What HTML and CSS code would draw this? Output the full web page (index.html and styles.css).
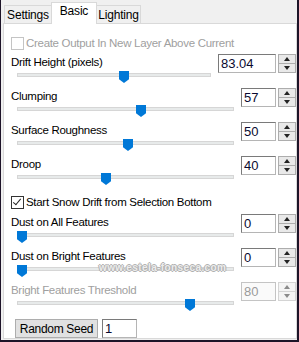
FILE: index.html
```html
<!DOCTYPE html>
<html lang="en">
<head>
    <meta charset="UTF-8">
    <title>Snow Drift - Basic</title>
    <link rel="stylesheet" href="styles.css">
</head>
<body>
    <div class="screen">
        <div class="dialog">
            <div class="tabs">
                <div class="tab settings">Settings</div>
                <div class="tab active">Basic</div>
                <div class="tab lighting">Lighting</div>
            </div>
            <div class="panel">
                <label class="check disabled">
                    <span class="box"></span>
                    Create Output In New Layer Above Current
                </label>

                <div class="param">
                    <div class="label">Drift Height (pixels)</div>
                    <div class="slider"><div class="track"></div><div class="thumb" style="left: 102px"></div></div>
                    <div class="spin wide">
                        <div class="field">83.04</div>
                        <div class="arrows"><span class="up"></span><span class="down"></span></div>
                    </div>
                </div>

                <div class="param">
                    <div class="label">Clumping</div>
                    <div class="slider"><div class="track"></div><div class="thumb" style="left: 119px"></div></div>
                    <div class="spin">
                        <div class="field">57</div>
                        <div class="arrows"><span class="up"></span><span class="down"></span></div>
                    </div>
                </div>

                <div class="param">
                    <div class="label">Surface Roughness</div>
                    <div class="slider"><div class="track"></div><div class="thumb" style="left: 106px"></div></div>
                    <div class="spin">
                        <div class="field">50</div>
                        <div class="arrows"><span class="up"></span><span class="down"></span></div>
                    </div>
                </div>

                <div class="param">
                    <div class="label">Droop</div>
                    <div class="slider"><div class="track"></div><div class="thumb" style="left: 84px"></div></div>
                    <div class="spin">
                        <div class="field">40</div>
                        <div class="arrows"><span class="up"></span><span class="down"></span></div>
                    </div>
                </div>

                <label class="check checked-row">
                    <span class="box checked"></span>
                    Start Snow Drift from Selection Bottom
                </label>

                <div class="param">
                    <div class="label">Dust on All Features</div>
                    <div class="slider"><div class="track"></div><div class="thumb" style="left: 0px"></div></div>
                    <div class="spin">
                        <div class="field">0</div>
                        <div class="arrows"><span class="up"></span><span class="down"></span></div>
                    </div>
                </div>

                <div class="param">
                    <div class="label">Dust on Bright Features</div>
                    <div class="slider"><div class="track"></div><div class="thumb" style="left: 0px"></div></div>
                    <div class="spin">
                        <div class="field">0</div>
                        <div class="arrows"><span class="up"></span><span class="down"></span></div>
                    </div>
                </div>

                <div class="param disabled">
                    <div class="label">Bright Features Threshold</div>
                    <div class="slider"><div class="track"></div><div class="thumb" style="left: 168px"></div></div>
                    <div class="spin">
                        <div class="field">80</div>
                        <div class="arrows"><span class="up"></span><span class="down"></span></div>
                    </div>
                </div>

                <div class="seed-row">
                    <button class="btn">Random Seed</button>
                    <div class="field seed">1</div>
                </div>

                <div class="watermark">www.estela-fonseca.com</div>
            </div>
        </div>
    </div>
</body>
</html>
```

FILE: styles.css
```css
body {
    margin: 0;
    font-family: "Liberation Sans", Arial, sans-serif;
    font-size: 11.5px;
    letter-spacing: -0.3px;
    color: #000;
}

.screen {
    width: 299px;
    height: 342px;
    box-sizing: border-box;
    padding: 0 2px 2px 1px;
    background-color: #1d1428;
}

.dialog {
    height: 100%;
    box-sizing: border-box;
    padding: 0 0 1px 2px;
    background-color: #f0f0f0;
    display: flex;
    flex-direction: column;
}

/* tab strip */
.tabs {
    display: flex;
    align-items: flex-end;
    height: 24px;
    padding-left: 1px;
}

.tab {
    height: 18px;
    line-height: 19px;
    text-align: center;
    border: 1px solid #d9d9d9;
    border-bottom: none;
    border-right: none;
    background-color: #f0f0f0;
    font-size: 12px;
    letter-spacing: -0.2px;
}

.tab.settings {
    width: 46px;
}

.tab.lighting {
    width: 43px;
    border-right: 1px solid #d9d9d9;
}

.tab.active {
    position: relative;
    z-index: 1;
    width: 44px;
    height: 21px;
    line-height: 17px;
    background-color: #fff;
    border-right: 1px solid #d9d9d9;
}

.tab.active + .tab {
    border-left: none;
}

/* panel */
.panel {
    position: relative;
    flex: 1;
    margin-top: -1px;
    padding: 9px 0 0 7px;
    border: 1px solid #d9d9d9;
    background-color: #fff;
}

.check {
    display: flex;
    align-items: center;
    gap: 2px;
    height: 20px;
    margin-bottom: 0;
}

.check.disabled {
    color: #a0a0a0;
}

.checked-row {
    margin: 3px 0 1px;
}

.box {
    width: 11px;
    height: 11px;
    border: 1px solid #333;
    background-color: #fff;
    position: relative;
}

.check.disabled .box {
    border-color: #c4c4c4;
}

.box.checked::after {
    content: "";
    position: absolute;
    left: 3px;
    top: 0;
    width: 3px;
    height: 7px;
    border: solid #222;
    border-width: 0 1.5px 1.5px 0;
    transform: rotate(40deg);
}

/* slider + spin rows */
.param {
    display: grid;
    grid-template-columns: 1fr auto;
    grid-template-rows: 16px 18px;
}

.param .label {
    grid-column: 1;
    grid-row: 1;
    line-height: 18px;
    white-space: nowrap;
}

.param.disabled .label {
    color: #a0a0a0;
}

.slider {
    grid-column: 1;
    grid-row: 2;
    position: relative;
    margin: 0 7px 0 6px;
}

.track {
    margin-top: 4px;
    height: 2px;
    border: 1px solid #d6d6d6;
    background-color: #e7eaea;
}

.thumb {
    position: absolute;
    top: 2px;
    width: 10px;
    height: 12px;
    background-color: #0078d7;
    clip-path: polygon(0 0, 100% 0, 100% 68%, 50% 100%, 0 68%);
}

.spin {
    grid-column: 2;
    grid-row: 1 / span 2;
    align-self: start;
    margin-top: 1px;
    display: flex;
    gap: 2px;
}

.field {
    width: 31px;
    height: 17px;
    line-height: 17px;
    padding-left: 2px;
    border: 1px solid #7a7a7a;
    border-right-color: #b5b5b5;
    border-bottom-color: #b5b5b5;
    background-color: #fff;
    color: #0a0a30;
    font-size: 13px;
    letter-spacing: 0;
}

.spin.wide .field {
    width: 54px;
}

.arrows {
    width: 18px;
    display: flex;
    flex-direction: column;
}

.arrows span {
    flex: 1;
    position: relative;
    border: 1px solid #adadad;
    background-color: #e9e9e9;
}

.arrows .down {
    border-top: none;
}

.arrows span::after {
    content: "";
    position: absolute;
    left: 5px;
    top: 2px;
    border-left: 3px solid transparent;
    border-right: 3px solid transparent;
}

.arrows .up::after {
    border-bottom: 4px solid #222;
}

.arrows .down::after {
    top: 2px;
    border-top: 4px solid #222;
}

.param.disabled .field {
    border-color: #c4c4c4;
    background-color: #fafafa;
    color: #9a9a9a;
}

.param.disabled .arrows span {
    border-color: #d4d4d4;
    background-color: #f4f4f4;
}

.param.disabled .arrows .up::after {
    border-bottom-color: #8a8a8a;
}

.param.disabled .arrows .down::after {
    border-top-color: #8a8a8a;
}

/* bottom row */
.seed-row {
    display: flex;
    gap: 4px;
    margin: 4px 0 0 4px;
}

.btn {
    width: 83px;
    height: 19px;
    padding: 0;
    border: 1px solid #adadad;
    background-color: #e1e1e1;
    font-family: inherit;
    font-size: 12px;
    letter-spacing: -0.3px;
    color: #000;
}

.field.seed {
    width: 31px;
    height: 17px;
}

.watermark {
    position: absolute;
    left: 95px;
    top: 238px;
    font-size: 10px;
    font-weight: bold;
    letter-spacing: 0.4px;
    color: #ececec;
    text-shadow: 1px 0 #b0b0b0, -1px 0 #b0b0b0, 0 1px #b0b0b0, 0 -1px #b0b0b0;
}
```
